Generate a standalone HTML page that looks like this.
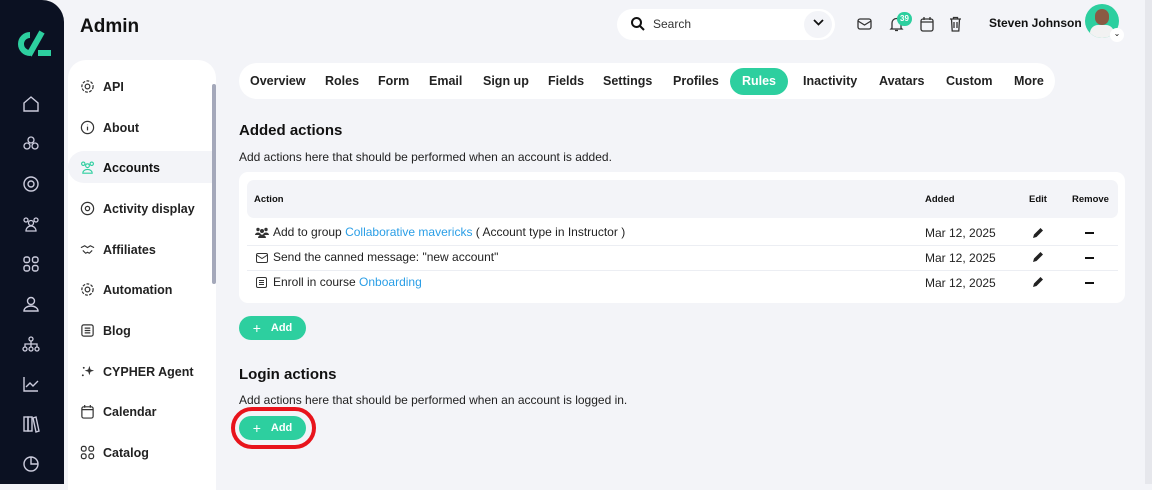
<!DOCTYPE html>
<html><head><meta charset="utf-8"><style>
*{margin:0;padding:0;box-sizing:border-box}
body{width:1152px;height:484px;overflow:hidden;background:#f3f4f8;font-family:"Liberation Sans",sans-serif;color:#111;position:relative}
.a{position:absolute}
.side{left:0;top:0;width:64px;height:484px;background:#0b1122;border-top-right-radius:22px}
.side svg{position:absolute;left:22px}
.sub{left:68px;top:60px;width:148px;height:430px;background:#fff;border-top-left-radius:18px;border-top-right-radius:18px}
.mi{position:absolute;left:12px;font-size:12.5px;font-weight:bold;color:#222;display:flex;align-items:center;gap:8px}
.mi svg{width:15px;height:15px}
.tabs{left:239px;top:63px;width:816px;height:36px;background:#fff;border-radius:18px}
.tab{position:absolute;top:11px;font-size:12.5px;font-weight:bold;color:#222}
.btn{background:#2dcf9f;color:#fff;border-radius:12px;font-size:11px;font-weight:bold;display:flex;align-items:center;justify-content:center;gap:10px}
.row{position:absolute;left:8px;width:871px;font-size:12px;color:#222}
.lnk{color:#2a9ee6}
.hdr{font-size:9.5px;font-weight:bold}
</style></head><body>
<div class="a side">
<svg style="top:30px;left:12px" width="40" height="28" viewBox="0 0 40 28"><path d="M18 5a9 9 0 1 0 0 18" stroke="#2dcf9f" stroke-width="6" fill="none"/><path d="M30 2L17 25" stroke="#2dcf9f" stroke-width="6"/><rect x="26" y="20" width="13" height="6" fill="#2dcf9f"/></svg>
<svg style="top:95px" width="18" height="18" viewBox="0 0 18 18" fill="none" stroke="#ccd" stroke-width="1.4"><path d="M2 8L9 2l7 6v8H2z"/></svg>
<svg style="top:135px" width="18" height="18" viewBox="0 0 18 18" fill="none" stroke="#ccd" stroke-width="1.3"><circle cx="9" cy="5" r="3"/><circle cx="5" cy="11" r="3"/><circle cx="13" cy="11" r="3"/></svg>
<svg style="top:175px" width="18" height="18" viewBox="0 0 18 18" fill="none" stroke="#ccd" stroke-width="1.4"><circle cx="9" cy="9" r="7"/><circle cx="9" cy="9" r="3"/></svg>
<svg style="top:215px" width="18" height="18" viewBox="0 0 18 18" fill="none" stroke="#ccd" stroke-width="1.3"><circle cx="4" cy="5" r="2"/><circle cx="14" cy="5" r="2"/><circle cx="9" cy="8" r="2.5"/><path d="M4 16a5 5 0 0 1 10 0z"/></svg>
<svg style="top:255px" width="18" height="18" viewBox="0 0 18 18" fill="none" stroke="#ccd" stroke-width="1.4"><rect x="2" y="2" width="5.5" height="5.5" rx="2"/><rect x="10.5" y="2" width="5.5" height="5.5" rx="2"/><rect x="2" y="10.5" width="5.5" height="5.5" rx="2"/><rect x="10.5" y="10.5" width="5.5" height="5.5" rx="2"/></svg>
<svg style="top:295px" width="18" height="18" viewBox="0 0 18 18" fill="none" stroke="#ccd" stroke-width="1.4"><circle cx="9" cy="6" r="3.5"/><path d="M2 16a7 5 0 0 1 14 0z"/></svg>
<svg style="top:335px" width="18" height="18" viewBox="0 0 18 18" fill="none" stroke="#ccd" stroke-width="1.3"><circle cx="9" cy="4" r="2"/><circle cx="3" cy="14" r="2"/><circle cx="9" cy="14" r="2"/><circle cx="15" cy="14" r="2"/><path d="M9 6v6M3 12V9h12v3"/></svg>
<svg style="top:375px" width="18" height="18" viewBox="0 0 18 18" fill="none" stroke="#ccd" stroke-width="1.4"><path d="M2 2v14h14M4 12l4-4 3 3 5-5"/></svg>
<svg style="top:415px" width="18" height="18" viewBox="0 0 18 18" fill="none" stroke="#ccd" stroke-width="1.4"><rect x="2" y="2" width="4" height="14"/><rect x="6" y="2" width="4" height="14"/><path d="M11 3l3-1 3 14-3 1z"/></svg>
<svg style="top:455px" width="18" height="18" viewBox="0 0 18 18" fill="none" stroke="#ccd" stroke-width="1.4"><circle cx="9" cy="9" r="7"/><path d="M9 2v7h7"/></svg>
</div>
<div class="a" style="left:80px;top:16px;font-size:19px;font-weight:bold">Admin</div>
<div class="a sub">
<div class="a" style="left:0;top:91px;width:148px;height:32px;background:#f3f4f8;border-radius:16px 0 0 16px"></div>
<div class="a" style="left:144px;top:24px;width:4px;height:200px;background:#a4a8ba;border-radius:2px"></div>
<div class="mi" style="top:19px"><svg viewBox="0 0 16 16" fill="none" stroke="#333" stroke-width="1.3"><circle cx="8" cy="8" r="2.5"/><circle cx="8" cy="8" r="6" stroke-dasharray="3 1.5"/></svg>API</div>
<div class="mi" style="top:60px"><svg viewBox="0 0 16 16" fill="none" stroke="#333" stroke-width="1.3"><circle cx="8" cy="8" r="6.5"/><path d="M8 7v4M8 5v.5"/></svg>About</div>
<div class="mi" style="top:100px;color:#111"><svg viewBox="0 0 16 16" fill="none" stroke="#2dcf9f" stroke-width="1.2"><circle cx="3.5" cy="4" r="1.8"/><circle cx="12.5" cy="4" r="1.8"/><circle cx="8" cy="6" r="2"/><path d="M3 14a5 4 0 0 1 10 0z"/></svg>Accounts</div>
<div class="mi" style="top:141px"><svg viewBox="0 0 16 16" fill="none" stroke="#333" stroke-width="1.3"><circle cx="8" cy="8" r="6.5"/><circle cx="8" cy="8" r="2.3"/></svg>Activity display</div>
<div class="mi" style="top:182px"><svg viewBox="0 0 16 16" fill="none" stroke="#333" stroke-width="1.2"><path d="M1 6l4-2 3 2 3-2 4 2M3 9l3 3 2-1 2 1 3-3"/></svg>Affiliates</div>
<div class="mi" style="top:222px"><svg viewBox="0 0 16 16" fill="none" stroke="#333" stroke-width="1.3"><circle cx="8" cy="8" r="2.5"/><circle cx="8" cy="8" r="6" stroke-dasharray="3 1.5"/></svg>Automation</div>
<div class="mi" style="top:263px"><svg viewBox="0 0 16 16" fill="none" stroke="#333" stroke-width="1.3"><rect x="2" y="2" width="12" height="12" rx="2"/><path d="M5 5.5h6M5 8h6M5 10.5h6"/></svg>Blog</div>
<div class="mi" style="top:304px"><svg viewBox="0 0 16 16" fill="#333"><path d="M10 2l1.2 3.8L15 7l-3.8 1.2L10 12 8.8 8.2 5 7l3.8-1.2z"/><circle cx="4" cy="4" r="1"/><circle cx="3" cy="12" r="1"/></svg>CYPHER Agent</div>
<div class="mi" style="top:344px"><svg viewBox="0 0 16 16" fill="none" stroke="#333" stroke-width="1.3"><rect x="2" y="3" width="12" height="12" rx="2"/><path d="M5 1v3M11 1v3M2 6h12"/></svg>Calendar</div>
<div class="mi" style="top:385px"><svg viewBox="0 0 16 16" fill="none" stroke="#333" stroke-width="1.3"><rect x="1.5" y="1.5" width="5" height="5" rx="2"/><rect x="9.5" y="1.5" width="5" height="5" rx="2"/><rect x="1.5" y="9.5" width="5" height="5" rx="2"/><rect x="9.5" y="9.5" width="5" height="5" rx="2"/></svg>Catalog</div>
</div>
<!-- top bar -->
<div class="a" style="left:617px;top:9px;width:218px;height:31px;background:#fff;border-radius:16px"></div>
<svg class="a" style="left:630px;top:16px" width="16" height="16" viewBox="0 0 16 16" fill="none" stroke="#111" stroke-width="2"><circle cx="6.5" cy="6.5" r="4.5"/><path d="M10 10l4 4"/></svg>
<div class="a" style="left:653px;top:17px;font-size:12px;color:#333">Search</div>
<div class="a" style="left:804px;top:11px;width:28px;height:27px;background:#f3f4f8;border-radius:14px"></div>
<svg class="a" style="left:813px;top:19px" width="11" height="8" viewBox="0 0 11 8" fill="none" stroke="#111" stroke-width="1.8"><path d="M1 1l4.5 4.5L10 1"/></svg>
<svg class="a" style="left:857px;top:18px" width="15" height="12" viewBox="0 0 15 12" fill="none" stroke="#333" stroke-width="1.3"><rect x="1" y="1" width="13" height="10" rx="2"/><path d="M1 3l6.5 4L14 3"/></svg>
<svg class="a" style="left:889px;top:16px" width="15" height="16" viewBox="0 0 15 16" fill="none" stroke="#333" stroke-width="1.3"><path d="M3 12V7a4.5 4.5 0 0 1 9 0v5l1 1H2zM6 14.5h3"/></svg>
<div class="a" style="left:897px;top:12px;width:15px;height:14px;background:#2dcf9f;border-radius:7px;color:#fff;font-size:8px;font-weight:bold;text-align:center;line-height:14px">39</div>
<svg class="a" style="left:920px;top:16px" width="14" height="16" viewBox="0 0 14 16" fill="none" stroke="#333" stroke-width="1.3"><rect x="1" y="3" width="12" height="12" rx="2"/><path d="M4 1v3M10 1v3M1 6h12"/></svg>
<svg class="a" style="left:949px;top:16px" width="13" height="16" viewBox="0 0 13 16" fill="none" stroke="#333" stroke-width="1.3"><path d="M1 3h11M4.5 3V1.5h4V3M2.5 3l.7 12h6.6l.7-12M5 6v6M8 6v6"/></svg>
<div class="a" style="left:989px;top:16px;font-size:12px;font-weight:bold">Steven Johnson</div>
<div class="a" style="left:1085px;top:4px;width:34px;height:34px;border-radius:17px;background:#2dcf9f;overflow:hidden"><div class="a" style="left:10px;top:5px;width:14px;height:16px;border-radius:7px;background:#8a5a44"></div><div class="a" style="left:5px;top:21px;width:24px;height:14px;border-radius:8px 8px 0 0;background:#f2f2f2"></div></div>
<div class="a" style="left:1110px;top:28px;width:14px;height:14px;border-radius:7px;background:#fff;font-size:8px;text-align:center;line-height:12px">⌄</div>
<div class="a" style="left:1145px;top:0;width:7px;height:484px;background:#e6e7ec"></div>
<!-- tabs -->
<div class="a tabs">
<span class="tab" style="left:11px">Overview</span>
<span class="tab" style="left:86px">Roles</span>
<span class="tab" style="left:139px">Form</span>
<span class="tab" style="left:190px">Email</span>
<span class="tab" style="left:244px">Sign up</span>
<span class="tab" style="left:309px">Fields</span>
<span class="tab" style="left:364px">Settings</span>
<span class="tab" style="left:434px">Profiles</span>
<div class="a" style="left:491px;top:5px;width:58px;height:27px;background:#2dcf9f;border-radius:14px;color:#fff;font-size:12.5px;font-weight:bold;text-align:center;line-height:27px">Rules</div>
<span class="tab" style="left:564px">Inactivity</span>
<span class="tab" style="left:640px">Avatars</span>
<span class="tab" style="left:707px">Custom</span>
<span class="tab" style="left:775px">More</span>
</div>
<div class="a" style="left:239px;top:122px;font-size:15px;font-weight:bold">Added actions</div>
<div class="a" style="left:239px;top:150px;font-size:12px;color:#222">Add actions here that should be performed when an account is added.</div>
<div class="a" style="left:239px;top:172px;width:886px;height:131px;background:#fff;border-radius:9px">
<div class="a" style="left:8px;top:8px;width:871px;height:38px;background:#f3f4f8;border-radius:7px"></div>
<div class="a hdr" style="left:15px;top:22px">Action</div>
<div class="a hdr" style="left:686px;top:22px">Added</div>
<div class="a hdr" style="left:790px;top:22px">Edit</div>
<div class="a hdr" style="left:833px;top:22px">Remove</div>
<div class="a" style="left:8px;top:73px;width:871px;height:1px;background:#eceef3"></div>
<div class="a" style="left:8px;top:98px;width:871px;height:1px;background:#eceef3"></div>
<div class="row" style="top:53px"><svg style="position:absolute;left:8px;top:2px" width="14" height="11" viewBox="0 0 14 11" fill="#333"><circle cx="3" cy="2.5" r="1.7"/><circle cx="11" cy="2.5" r="1.7"/><circle cx="7" cy="4" r="2"/><path d="M0 8a3 2.5 0 0 1 6 0zM8 8a3 2.5 0 0 1 6 0zM3 11a4 3.5 0 0 1 8 0z"/></svg><span style="position:absolute;left:26px">Add to group <span class="lnk">Collaborative mavericks</span> ( Account type in Instructor )</span></div>
<div class="row" style="top:78px"><svg style="position:absolute;left:9px;top:3px" width="12" height="10" viewBox="0 0 12 10" fill="none" stroke="#333" stroke-width="1"><rect x=".5" y=".5" width="11" height="9" rx="1.5"/><path d="M.5 2l5.5 3.5L11.5 2"/></svg><span style="position:absolute;left:26px">Send the canned message: "new account"</span></div>
<div class="row" style="top:103px"><svg style="position:absolute;left:9px;top:2px" width="11" height="11" viewBox="0 0 11 11" fill="none" stroke="#333" stroke-width="1"><rect x=".5" y=".5" width="10" height="10" rx="1.5"/><path d="M3 3.5h5M3 5.5h5M3 7.5h5"/></svg><span style="position:absolute;left:26px">Enroll in course <span class="lnk">Onboarding</span></span></div>
<div class="a" style="left:686px;top:54px;font-size:12px;color:#222">Mar 12, 2025</div>
<div class="a" style="left:686px;top:79px;font-size:12px;color:#222">Mar 12, 2025</div>
<div class="a" style="left:686px;top:104px;font-size:12px;color:#222">Mar 12, 2025</div>
<svg class="a" style="left:793px;top:55px" width="12" height="12" viewBox="0 0 12 12"><path d="M1 11l1-3.5L8.5 1 11 3.5 4.5 10z" fill="#222"/></svg>
<svg class="a" style="left:793px;top:79px" width="12" height="12" viewBox="0 0 12 12"><path d="M1 11l1-3.5L8.5 1 11 3.5 4.5 10z" fill="#222"/></svg>
<svg class="a" style="left:793px;top:104px" width="12" height="12" viewBox="0 0 12 12"><path d="M1 11l1-3.5L8.5 1 11 3.5 4.5 10z" fill="#222"/></svg>
<div class="a" style="left:846px;top:60px;width:9px;height:2px;background:#111"></div>
<div class="a" style="left:846px;top:85px;width:9px;height:2px;background:#111"></div>
<div class="a" style="left:846px;top:110px;width:9px;height:2px;background:#111"></div>
</div>
<div class="a btn" style="left:239px;top:316px;width:67px;height:24px"><span style="font-size:14px;font-weight:normal">+</span>Add</div>
<div class="a" style="left:239px;top:366px;font-size:15px;font-weight:bold">Login actions</div>
<div class="a" style="left:239px;top:393px;font-size:12px;color:#222">Add actions here that should be performed when an account is logged in.</div>
<div class="a" style="left:231px;top:407px;width:85px;height:42px;border:4px solid #e8141c;border-radius:21px"></div>
<div class="a btn" style="left:239px;top:416px;width:67px;height:24px"><span style="font-size:14px;font-weight:normal">+</span>Add</div>
</body></html>
